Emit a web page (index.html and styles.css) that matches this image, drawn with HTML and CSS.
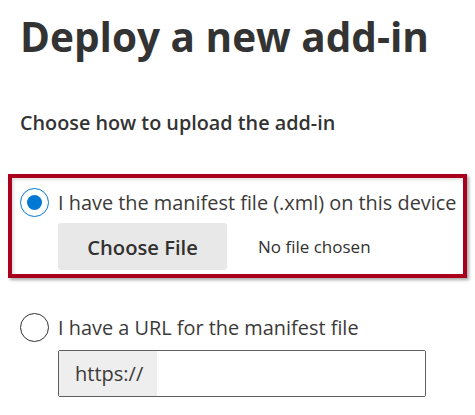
FILE: index.html
```html
<!DOCTYPE html>
<html>
<head>
<meta charset="utf-8">
<link rel="stylesheet" href="styles.css">
</head>
<body>
<div class="page">
  <h1 class="title">Deploy a new add-in</h1>
  <p class="subtitle">Choose how to upload the add-in</p>
  <div class="highlight">
    <div class="option">
      <span class="radio radio-on"><span class="dot"></span></span>
      <span class="label">I have the manifest file (.xml) on this device</span>
    </div>
    <div class="file-row">
      <span class="btn">Choose File</span>
      <span class="nofile">No file chosen</span>
    </div>
  </div>
  <div class="option option-2">
    <span class="radio"></span>
    <span class="label">I have a URL for the manifest file</span>
  </div>
  <div class="url">
    <span class="prefix">https://</span>
    <span class="url-field"></span>
  </div>
</div>
</body>
</html>
```

FILE: styles.css
```css
html, body {
  margin: 0;
  background: #ffffff;
}
.page {
  padding: 7px 0 0 8px;
  font-family: "Open Sans", "Noto Sans", sans-serif;
  color: #323130;
}
.title {
  margin: 0 0 0 12px;
  font-size: 40.5px;
  line-height: 60px;
  font-weight: 700;
  color: #333333;
}
.subtitle {
  margin: 44px 0 0 12px;
  font-size: 19.8px;
  line-height: 24px;
  font-weight: 600;
  color: #333333;
}
.highlight {
  margin-top: 39px;
  width: 443px;
  height: 86px;
  border: 4px solid #a8001d;
  box-shadow: 2px 2px 3px rgba(0, 0, 0, 0.35), inset 2px 2px 3px rgba(0, 0, 0, 0.12);
  padding: 10px 0 0 8px;
  box-sizing: content-box;
}
.option {
  display: flex;
  align-items: center;
  gap: 9px;
  height: 29px;
}
.option-2 {
  margin: 35px 0 0 12px;
}
.radio {
  width: 29px;
  height: 29px;
  box-sizing: border-box;
  border: 1.5px solid #323130;
  border-radius: 50%;
  display: flex;
  align-items: center;
  justify-content: center;
  flex: none;
}
.radio-on {
  border-color: #0078d4;
}
.dot {
  width: 15px;
  height: 15px;
  border-radius: 50%;
  background: #0078d4;
}
.label {
  font-size: 19.9px;
  line-height: 29px;
  color: #3b3a39;
  white-space: nowrap;
}
.file-row {
  display: flex;
  align-items: center;
  margin: 6px 0 0 38px;
}
.btn {
  width: 169px;
  height: 47px;
  border-radius: 3px;
  background: #e8e8e8;
  display: flex;
  align-items: center;
  justify-content: center;
  font-size: 20.2px;
  font-weight: 600;
  color: #323130;
}
.nofile {
  margin-left: 31px;
  font-size: 17px;
  color: #323130;
}
.url {
  display: flex;
  margin: 8px 0 0 50px;
  width: 368px;
  height: 47px;
  box-sizing: border-box;
  border: 1px solid #605e5c;
  border-radius: 2px;
  overflow: hidden;
}
.prefix {
  width: 98px;
  background: #eeeeee;
  display: flex;
  align-items: center;
  padding-left: 16px;
  box-sizing: border-box;
  font-size: 20px;
  color: #3b3a39;
}
.url-field {
  flex: 1;
  background: #ffffff;
}
```
